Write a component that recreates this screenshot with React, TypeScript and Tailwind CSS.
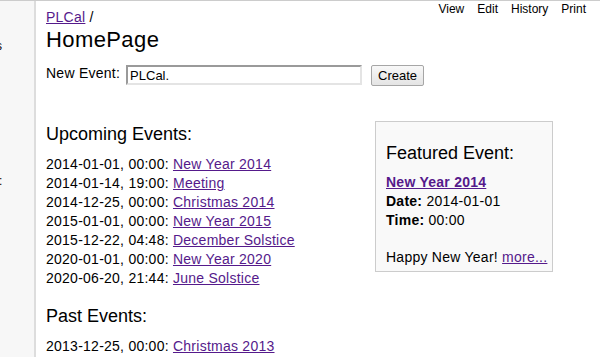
import React from "react"

const upcoming = [
  { when: "2014-01-01, 00:00", title: "New Year 2014" },
  { when: "2014-01-14, 19:00", title: "Meeting" },
  { when: "2014-12-25, 00:00", title: "Christmas 2014" },
  { when: "2015-01-01, 00:00", title: "New Year 2015" },
  { when: "2015-12-22, 04:48", title: "December Solstice" },
  { when: "2020-01-01, 00:00", title: "New Year 2020" },
  { when: "2020-06-20, 21:44", title: "June Solstice" },
]

const past = [{ when: "2013-12-25, 00:00", title: "Christmas 2013" }]

const linkCls = "text-[#551a8b] underline"

const EventRow = ({ when, title }: { when: string; title: string }) => (
  <li className="text-[14px] leading-[19px] tracking-[0.25px]">
    {when}: <a href="#" className={linkCls}>{title}</a>
  </li>
)

export default function App() {
  return (
    <div className="w-[600px] h-[357px] overflow-hidden bg-white text-black border-t border-[#cccccc] flex font-['Liberation_Sans',Arial,sans-serif]">
      {/* Sidebar */}
      <div className="w-[36px] shrink-0 bg-[#f7f7f7] border-r-2 border-[#dddddd] overflow-hidden pt-[38px] text-[12px] leading-[14px]">
        <div className="-ml-[4px]">s</div>
        <div className="mt-[121px] -ml-[1px]">:</div>
      </div>

      {/* Main */}
      <div className="flex-1 pl-[10px]">
        <div className="flex justify-between items-start">
          <div className="pt-[8px] text-[14px] leading-[16px] tracking-[0.25px]">
            <a href="#" className={linkCls}>PLCal</a> /
          </div>
          <nav className="mt-[1px] pr-[14px] flex gap-[13px] text-[12px] leading-[14px]">
            <span>View</span>
            <span>Edit</span>
            <span>History</span>
            <span>Print</span>
          </nav>
        </div>

        <h1 className="mt-[2px] text-[22px] leading-[26px] tracking-[0.4px]">HomePage</h1>

        <div className="mt-[12px] flex items-start">
          <span className="text-[14px] leading-[16px] tracking-[0.25px]">New Event:</span>
          <input
            defaultValue="PLCal."
            className="ml-[6px] w-[236px] h-[20px] px-[2px] text-[13px] border-2 border-t-[#9a9a9a] border-l-[#9a9a9a] border-b-[#e4e4e4] border-r-[#e4e4e4] outline-none font-['Liberation_Sans',Arial,sans-serif]"
          />
          <button className="ml-[9px] w-[53px] h-[21px] text-[13px] leading-[19px] border border-[#a6a6a6] rounded-[2px] bg-gradient-to-b from-[#f8f8f8] to-[#e4e4e4] font-['Liberation_Sans',Arial,sans-serif]">
            Create
          </button>
        </div>

        <div className="flex items-start">
          <div className="flex-1">
            <h2 className="mt-[37px] text-[18px] leading-[22px]">Upcoming Events:</h2>
            <ul className="mt-[10px]">
              {upcoming.map((e) => (
                <EventRow key={e.when} {...e} />
              ))}
            </ul>
            <h2 className="mt-[17px] text-[18px] leading-[22px]">Past Events:</h2>
            <ul className="mt-[10px]">
              {past.map((e) => (
                <EventRow key={e.when} {...e} />
              ))}
            </ul>
          </div>

          {/* Featured */}
          <div className="mt-[35px] mr-[47px] w-[178px] h-[151px] border border-[#cccccc] bg-[#f9f9f9] pl-[10px] pt-[20px]">
            <h3 className="text-[18px] leading-[22px]">Featured Event:</h3>
            <div className="mt-[9px] text-[14px] leading-[19px] tracking-[0.25px]">
              <a href="#" className={`${linkCls} font-bold`}>New Year 2014</a>
              <div>
                <b>Date:</b> 2014-01-01
              </div>
              <div>
                <b>Time:</b> 00:00
              </div>
              <div className="mt-[18px]">
                Happy New Year! <a href="#" className={linkCls}>more...</a>
              </div>
            </div>
          </div>
        </div>
      </div>
    </div>
  )
}
